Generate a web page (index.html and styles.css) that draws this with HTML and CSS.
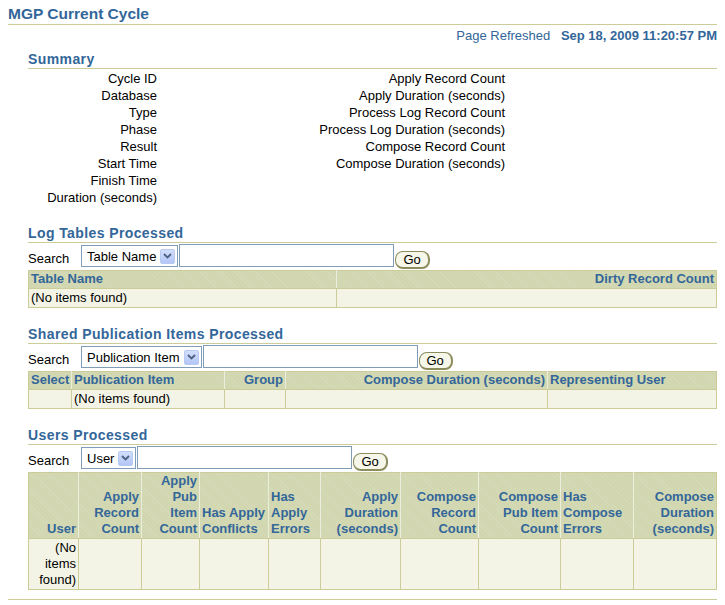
FILE: index.html
```html
<!DOCTYPE html>
<html lang="en">
<head>
  <meta charset="UTF-8">
  <title>MGP Current Cycle</title>
  <link rel="stylesheet" href="styles.css">
</head>
<body>
  <h1 class="page-title">MGP Current Cycle</h1>
  <div class="refreshed">
    <span class="refreshed-label">Page Refreshed</span>
    <span class="refreshed-date">Sep 18, 2009 11:20:57 PM</span>
  </div>

  <div class="section summary">
    <h2 class="section-title">Summary</h2>
    <div class="summary-grid">
      <div class="summary-col">
        <div>Cycle ID</div>
        <div>Database</div>
        <div>Type</div>
        <div>Phase</div>
        <div>Result</div>
        <div>Start Time</div>
        <div>Finish Time</div>
        <div>Duration (seconds)</div>
      </div>
      <div class="summary-col summary-col-wide">
        <div>Apply Record Count</div>
        <div>Apply Duration (seconds)</div>
        <div>Process Log Record Count</div>
        <div>Process Log Duration (seconds)</div>
        <div>Compose Record Count</div>
        <div>Compose Duration (seconds)</div>
      </div>
    </div>
  </div>

  <div class="section">
    <h2 class="section-title">Log Tables Processed</h2>
    <div class="search-bar">
      <span class="search-label">Search</span>
      <span class="select">Table Name<span class="select-arrow"><svg width="9" height="6" viewBox="0 0 9 6"><path d="M1 1 L4.5 4.5 L8 1" fill="none" stroke="#4d6185" stroke-width="1.8"/></svg></span></span>
      <input class="search-input" type="text">
      <button class="go-button" type="button">Go</button>
    </div>
    <table class="data-table">
      <colgroup>
        <col class="col-table-name">
        <col>
      </colgroup>
      <tr>
        <th>Table Name</th>
        <th class="num">Dirty Record Count</th>
      </tr>
      <tr>
        <td>(No items found)</td>
        <td></td>
      </tr>
    </table>
  </div>

  <div class="section">
    <h2 class="section-title">Shared Publication Items Processed</h2>
    <div class="search-bar">
      <span class="search-label">Search</span>
      <span class="select">Publication Item<span class="select-arrow"><svg width="9" height="6" viewBox="0 0 9 6"><path d="M1 1 L4.5 4.5 L8 1" fill="none" stroke="#4d6185" stroke-width="1.8"/></svg></span></span>
      <input class="search-input" type="text">
      <button class="go-button" type="button">Go</button>
    </div>
    <table class="data-table">
      <colgroup>
        <col class="col-select">
        <col class="col-pub-item">
        <col class="col-group">
        <col class="col-compose-dur">
        <col>
      </colgroup>
      <tr>
        <th>Select</th>
        <th>Publication Item</th>
        <th class="num">Group</th>
        <th class="num">Compose Duration (seconds)</th>
        <th>Representing User</th>
      </tr>
      <tr>
        <td></td>
        <td>(No items found)</td>
        <td></td>
        <td></td>
        <td></td>
      </tr>
    </table>
  </div>

  <div class="section">
    <h2 class="section-title">Users Processed</h2>
    <div class="search-bar">
      <span class="search-label">Search</span>
      <span class="select">User<span class="select-arrow"><svg width="9" height="6" viewBox="0 0 9 6"><path d="M1 1 L4.5 4.5 L8 1" fill="none" stroke="#4d6185" stroke-width="1.8"/></svg></span></span>
      <input class="search-input" type="text">
      <button class="go-button" type="button">Go</button>
    </div>
    <table class="data-table users-table">
      <colgroup>
        <col class="col-user">
        <col class="col-apply-rec">
        <col class="col-apply-pub">
        <col class="col-apply-conf">
        <col class="col-apply-err">
        <col class="col-apply-dur">
        <col class="col-compose-rec">
        <col class="col-compose-pub">
        <col class="col-compose-err">
        <col>
      </colgroup>
      <tr>
        <th class="num">User</th>
        <th class="num">Apply Record Count</th>
        <th class="num">Apply Pub Item Count</th>
        <th>Has Apply Conflicts</th>
        <th>Has Apply Errors</th>
        <th class="num">Apply Duration (seconds)</th>
        <th class="num">Compose Record Count</th>
        <th class="num">Compose Pub Item Count</th>
        <th>Has Compose Errors</th>
        <th class="num">Compose Duration (seconds)</th>
      </tr>
      <tr>
        <td class="num">(No items found)</td>
        <td></td>
        <td></td>
        <td></td>
        <td></td>
        <td></td>
        <td></td>
        <td></td>
        <td></td>
        <td></td>
      </tr>
    </table>
  </div>

  <div class="page-footer"></div>
</body>
</html>
```

FILE: styles.css
```css
body {
  margin: 4px 8px;
  font-family: "Liberation Sans", Arial, sans-serif;
  font-size: 13px;
  color: #000;
  background: #fff;
}

.page-title {
  margin: 0;
  padding-bottom: 1px;
  font-size: 15.5px;
  line-height: 19px;
  font-weight: bold;
  color: #336699;
  border-bottom: 1px solid #cccc99;
}

.refreshed {
  margin-top: 2px;
  line-height: 17px;
  text-align: right;
  color: #336699;
}

.refreshed-label {
  margin-right: 7px;
}

.refreshed-date {
  font-weight: bold;
}

.section {
  margin-left: 20px;
  margin-top: 17px;
}

.section.summary {
  margin-top: 6px;
}

.section-title {
  margin: 0;
  font-size: 14px;
  line-height: 18px;
  font-weight: bold;
  letter-spacing: 0.4px;
  color: #336699;
  border-bottom: 1px solid #cccc99;
}

.summary-grid {
  display: flex;
  margin-top: 1px;
  padding-bottom: 1px;
  line-height: 17px;
}

.summary-col {
  width: 129px;
  text-align: right;
}

.summary-col-wide {
  width: 348px;
}

.search-bar {
  display: flex;
  align-items: flex-end;
  margin-top: 1px;
}

.search-label {
  width: 53px;
  line-height: 17px;
}

.select {
  display: flex;
  align-items: center;
  box-sizing: border-box;
  height: 22px;
  padding: 0 2px 0 5px;
  border: 1px solid #7f9db9;
  background: #fff;
  white-space: nowrap;
}

.select-arrow {
  display: flex;
  align-items: center;
  justify-content: center;
  width: 15px;
  height: 15px;
  margin-left: 4px;
  box-sizing: border-box;
  border: 1px solid #b6c9f2;
  border-radius: 2px;
  background: linear-gradient(#d3defc, #b3c6f5);
}

.search-input {
  box-sizing: border-box;
  width: 215px;
  height: 23px;
  margin: 0 0 0 1px;
  padding: 0 3px;
  border: 1px solid #7f9db9;
  font: inherit;
}

.go-button {
  box-sizing: border-box;
  height: 18px;
  margin: 0 0 -2px 1px;
  padding: 0 7px;
  border: 1px solid #8c8c5e;
  border-right-width: 2px;
  border-bottom-width: 2px;
  border-radius: 8px;
  background: #f7f7e9;
  font-family: "Liberation Sans", Arial, sans-serif;
  font-size: 13px;
  line-height: 14px;
  color: #000;
}

.data-table {
  width: 100%;
  margin-top: 3px;
  table-layout: fixed;
  border-collapse: collapse;
  border: 1px solid #cccc99;
}

.data-table th {
  padding: 0 2px 1px;
  line-height: 16px;
  font-weight: bold;
  text-align: left;
  vertical-align: bottom;
  color: #336699;
  background-color: #d0d6ae;
  background-image: repeating-linear-gradient(45deg, rgba(255, 255, 255, 0.13) 0 1px, transparent 1px 3px);
  border-left: 1px solid #eceedd;
  border-bottom: 1px solid #cccc99;
  white-space: normal;
}

.data-table th:first-child {
  border-left-color: #cccc99;
}

.data-table td {
  padding: 1px 2px;
  line-height: 16px;
  vertical-align: top;
  background: #f3f4e6;
  border: 1px solid #cccc99;
}

.data-table .num {
  text-align: right;
}

.col-table-name { width: 308px; }

.col-select { width: 43px; }
.col-pub-item { width: 153px; }
.col-group { width: 61px; }
.col-compose-dur { width: 262px; }

.col-user { width: 50px; }
.col-apply-rec { width: 63px; }
.col-apply-pub { width: 58px; }
.col-apply-conf { width: 69px; }
.col-apply-err { width: 52px; }
.col-apply-dur { width: 80px; }
.col-compose-rec { width: 78px; }
.col-compose-pub { width: 82px; }
.col-compose-err { width: 73px; }

.page-footer {
  margin-top: 9px;
  border-top: 1px solid #cccc99;
}
```
